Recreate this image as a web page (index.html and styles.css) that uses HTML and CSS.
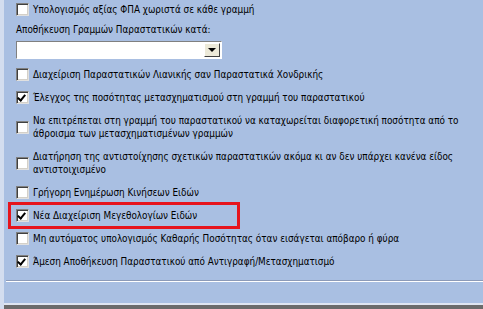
FILE: index.html
```html
<!DOCTYPE html>
<html lang="el">
<head>
<meta charset="utf-8">
<link rel="stylesheet" href="styles.css">
</head>
<body>
<div class="panel">
  <div class="content">
    <label class="row"><span class="cb"></span><span class="txt">Υπολογισμός αξίας ΦΠΑ χωριστά σε κάθε γραμμή</span></label>
    <div class="field-label">Αποθήκευση Γραμμών Παραστατικών κατά:</div>
    <div class="combo"><span class="combo-text"></span><span class="combo-btn"><span class="arrow"></span></span></div>
    <label class="row"><span class="cb"></span><span class="txt">Διαχείριση Παραστατικών Λιανικής σαν Παραστατικά Χονδρικής</span></label>
    <label class="row"><span class="cb checked"></span><span class="txt">Έλεγχος της ποσότητας μετασχηματισμού στη γραμμή του παραστατικού</span></label>
    <label class="row two"><span class="cb"></span><span class="txt">Να επιτρέπεται στη γραμμή του παραστατικού να καταχωρείται διαφορετική ποσότητα από το άθροισμα των μετασχηματισμένων γραμμών</span></label>
    <label class="row two"><span class="cb"></span><span class="txt">Διατήρηση της αντιστοίχησης σχετικών παραστατικών ακόμα κι αν δεν υπάρχει κανένα είδος αντιστοιχισμένο</span></label>
    <label class="row"><span class="cb"></span><span class="txt">Γρήγορη Ενημέρωση Κινήσεων Ειδών</span></label>
    <label class="row highlight"><span class="cb checked"></span><span class="txt">Νέα Διαχείριση Μεγεθολογίων Ειδών</span></label>
    <label class="row"><span class="cb"></span><span class="txt">Μη αυτόματος υπολογισμός Καθαρής Ποσότητας όταν εισάγεται απόβαρο ή φύρα</span></label>
    <label class="row"><span class="cb checked"></span><span class="txt">Άμεση Αποθήκευση Παραστατικού από Αντιγραφή/Μετασχηματισμό</span></label>
  </div>
  <div class="sep"></div>
  <div class="footer"></div>
</div>
</body>
</html>
```
FILE: styles.css
```css
html, body {
  margin: 0;
  padding: 0;
  width: 483px;
  height: 309px;
  overflow: hidden;
  background: #a9bfe2;
}
.panel {
  height: 309px;
  box-sizing: border-box;
  border-left: 4px solid #d3ddef;
  display: flex;
  flex-direction: column;
  font-family: "DejaVu Sans Condensed", "DejaVu Sans", sans-serif;
  font-size: 9.85px;
  color: #000;
}
.content {
  flex: 1;
  padding: 3px 0 0 12px;
  display: flex;
  flex-direction: column;
}
.row {
  display: flex;
  align-items: center;
  height: 23px;
  margin-right: 6px;
}
.row:first-child {
  height: 14px;
  align-items: flex-start;
}
.row.two {
  height: 36px;
}
.cb {
  flex: none;
  width: 11px;
  height: 11px;
  background: #fff;
  border: 1px solid;
  border-color: #808080 #e0e0e0 #e0e0e0 #808080;
  box-shadow: inset 1px 1px 0 #404040, inset -1px -1px 0 #d4d0c8;
  margin-right: 4px;
  position: relative;
}
.cb.checked::after {
  content: "";
  position: absolute;
  left: 2px;
  top: 1px;
  width: 3px;
  height: 6px;
  border: solid #000;
  border-width: 0 2px 2px 0;
  transform: rotate(40deg);
}
.txt {
  line-height: 13px;
}
.field-label {
  margin-top: 6px;
  height: 13px;
  line-height: 13px;
}
.combo {
  margin-top: 5px;
  width: 206px;
  height: 18px;
  box-sizing: border-box;
  background: #fff;
  border: 1px solid;
  border-color: #808080 #fff #fff #808080;
  display: flex;
  justify-content: flex-end;
  align-items: stretch;
  padding: 1px;
  margin-bottom: 4px;
}
.combo-btn {
  width: 16px;
  background: #ece9d8;
  border: 1px solid;
  border-color: #fff #404040 #404040 #fff;
  box-sizing: border-box;
  display: flex;
  align-items: center;
  justify-content: center;
}
.arrow {
  width: 0;
  height: 0;
  border-left: 4px solid transparent;
  border-right: 4px solid transparent;
  border-top: 4px solid #000;
}
.highlight {
  outline: 3px solid #e6141c;
  outline-offset: -1px;
  margin-left: -6px;
  padding-left: 6px;
  width: 222px;
}
.sep {
  height: 1px;
  margin-left: 2px;
  background: #8c9ab8;
  border-bottom: 1px solid #fff;
}
.footer {
  height: 21px;
  border-bottom: 2px solid #dfe5f1;
  box-shadow: 0 4px 0 #6b6b6b;
  margin-bottom: 4px;
}
```
